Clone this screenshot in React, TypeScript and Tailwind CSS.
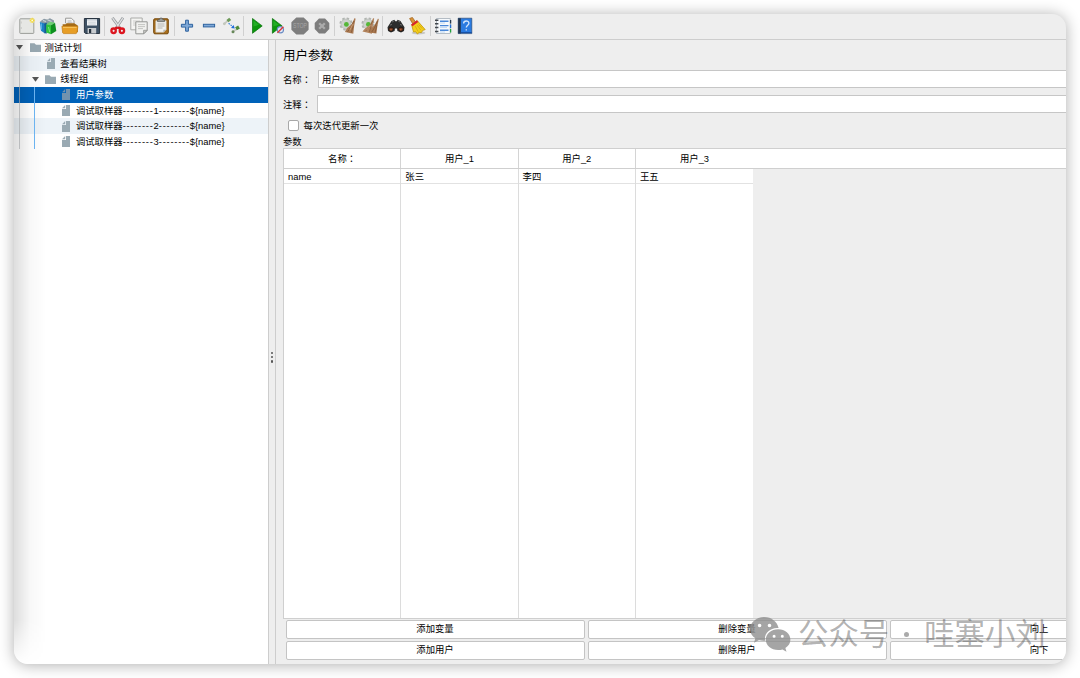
import clsx from "clsx"
import type { ReactNode } from "react"

interface TreeItem {
  label: string
  depth: number
  folder?: boolean
  selected?: boolean
}

const treeItems: TreeItem[] = [
  { label: "测试计划", depth: 0, folder: true },
  { label: "查看结果树", depth: 1 },
  { label: "线程组", depth: 1, folder: true },
  { label: "用户参数", depth: 2, selected: true },
  { label: "调试取样器--------1--------${name}", depth: 2 },
  { label: "调试取样器--------2--------${name}", depth: 2 },
  { label: "调试取样器--------3--------${name}", depth: 2 },
]

const columns = [
  { title: "名称：", value: "name" },
  { title: "用户_1", value: "张三" },
  { title: "用户_2", value: "李四" },
  { title: "用户_3", value: "王五" },
]

const buttonRows = [
  ["添加变量", "删除变量", "向上"],
  ["添加用户", "删除用户", "向下"],
]

const indents = ["pl-0", "pl-[15.7px]", "pl-[31.4px]"]

const Icon = ({ children }: { children: ReactNode }) => (
  <span className="flex w-[21.7px] shrink-0 justify-center">
    <svg width="18" height="18" viewBox="0 0 18 18" fill="none">
      {children}
    </svg>
  </span>
)

const Separator = () => (
  <span className="flex w-[4.4px] shrink-0 justify-center">
    <span className="h-[20px] w-px bg-[#d0d0d0]" />
  </span>
)

const NewIcon = () => (
  <Icon>
    <rect x="1.8" y="1.8" width="14" height="14.6" rx="0.6" fill="#e6e7e4" stroke="#9b9d99" />
    <path d="M3.3 4.5v2M3.3 10v2" stroke="#c5c5c2" strokeWidth="0.8" />
    <circle cx="14.2" cy="3.4" r="2.6" fill="#f5e57a" opacity="0.8" />
    <path d="M14.2 0.6l.8 2 2 .8-2 .8-.8 2-.8-2-2-.8 2-.8z" fill="#f3d633" />
    <circle cx="14.2" cy="3.4" r="0.9" fill="#fffce0" />
  </Icon>
)

const TemplatesIcon = () => (
  <Icon>
    <path d="M1 4.5l4-2.7 3 .6 3-1.2 4 2.3v5l-7 2z" fill="#8a9aa5" />
    <path d="M4 3.5l3 1M8.5 2.8l4 1.6" stroke="#cfd6da" strokeWidth="1.1" />
    <path d="M0.8 5l4.8 1.5v9.8L2 13.8z" fill="#1b7fc4" />
    <path d="M2.2 6.6v6" stroke="#6cc0ee" strokeWidth="1.1" />
    <path d="M5.2 6.4l2.6-.6v10.8l-2.6-.4z" fill="#115a94" />
    <path d="M7.2 7.2l4.8 1v9l-4.8-1.7z" fill="#2fc43c" />
    <path d="M12 8.2l4-2.4 1.3 8.2-5.3 3.2z" fill="#0f8f20" />
    <path d="M7.2 7.2L11 4.8l5 1-4 2.4z" fill="#6fcf74" />
    <path d="M9.5 10l1.2 5" stroke="#7cea7e" />
  </Icon>
)

const OpenIcon = () => (
  <Icon>
    <path d="M4.6 6.2V1.2h5.8l2.6 2.6v4" fill="#f5f5f5" stroke="#9a9a98" />
    <path d="M6.5 4h4M6.5 5.8h5" stroke="#b5b5b5" />
    <path d="M1.6 7.2h3l1-1h7.6l3.6 2.2V15H2.4z" fill="#a46a16" />
    <path d="M0.9 9.3h14l2 .2-1 6.4-1 .7H2.6l-.9-.7z" fill="#e79e26" stroke="#c47e14" strokeWidth="0.7" />
    <path d="M2 10.4h13.6" stroke="#f8c560" />
  </Icon>
)

const SaveIcon = () => (
  <Icon>
    <path d="M1.4 1.5h15.2v15H2.6l-1.2-1.2z" fill="#3e5164" stroke="#293542" />
    <path d="M4 2h10v6.5H4z" fill="#eef1f4" />
    <path d="M4 2h10v1.6H4z" fill="#c3cbd2" />
    <path d="M5.2 5.2h7.6M5.2 7h7.6" stroke="#c5cbd0" strokeWidth="0.8" />
    <path d="M4.6 11h8.6v5.4H4.6z" fill="#c8cccf" />
    <path d="M6 12h2.2v4H6z" fill="#25313c" />
  </Icon>
)

const CutIcon = () => (
  <Icon>
    <path d="M3.4 0.8L11 11.2M14 0.8L7 11.2" stroke="#9a9da0" strokeWidth="2.8" />
    <path d="M3.6 1.2l6.6 9M13.8 1.2l-6 8.6" stroke="#e0e2e3" strokeWidth="1.3" />
    <path d="M8.8 10.4l-2.6 1.3M9 10.4l2.6 1.3" stroke="#d3141c" strokeWidth="2.6" />
    <ellipse cx="4.6" cy="13.8" rx="2.2" ry="2.3" stroke="#dc1620" strokeWidth="2.3" />
    <ellipse cx="12.9" cy="13.8" rx="2.2" ry="2.3" stroke="#dc1620" strokeWidth="2.3" />
  </Icon>
)

const CopyIcon = () => (
  <Icon>
    <path d="M0.8 1h11.4v11.8H0.8z" fill="#f4f4f2" stroke="#aaaba8" />
    <path d="M3 4h7M3 6h7M3 8h4" stroke="#c8c8c6" strokeWidth="0.9" />
    <path d="M5.8 4.8h11.4v8.6l-3.4 3.4h-8z" fill="#f1f1ef" stroke="#959693" />
    <path d="M8 7.6h7M8 9.6h7M8 11.6h5" stroke="#bebfbc" strokeWidth="0.9" />
    <path d="M13.6 16.8v-3.5h3.5z" fill="#c7c8c5" stroke="#8b8c89" strokeWidth="0.7" />
  </Icon>
)

const PasteIcon = () => (
  <Icon>
    <rect x="1.7" y="1.8" width="14.6" height="15" rx="1.2" fill="#aa711f" stroke="#744709" />
    <path d="M3.8 3.8h10.4v8.8l-2.6 2.6H3.8z" fill="#f2f2ef" stroke="#c9c9c4" strokeWidth="0.6" />
    <path d="M5.5 7h7M5.5 9h7M5.5 11h5" stroke="#aaaaa7" strokeWidth="0.9" />
    <path d="M5.5 4.6V3l2-.6.6-1.3h2l.6 1.3 1.8.6v1.6z" fill="#9a9b98" stroke="#565754" strokeWidth="0.7" />
    <path d="M11.4 15.4v-2.6H14z" fill="#b5b5b2" />
  </Icon>
)

const PlusIcon = () => (
  <Icon>
    <path d="M7.6 3.2h2.8v4.1h4.2v2.8h-4.2v4.1H7.6v-4.1H3.4V7.3h4.2z" fill="#7fa9d8" stroke="#2f639f" />
  </Icon>
)

const MinusIcon = () => (
  <Icon>
    <rect x="3.4" y="7.3" width="11.2" height="2.6" fill="#7fa9d8" stroke="#2f639f" />
  </Icon>
)

const ToggleIcon = () => (
  <Icon>
    <path d="M1.6 7.2l4.4-3.6M11 14.4l6-3.6" stroke="#c6c9c2" strokeWidth="1.8" />
    <path d="M5.4 4.2l2.8-2.4" stroke="#6d9a58" strokeWidth="3" />
    <path d="M14 11.8l3-1.8" stroke="#4f8b3a" strokeWidth="3.4" />
    <circle cx="11" cy="14.8" r="1.5" fill="#67885a" />
    <circle cx="2.4" cy="6.8" r="1.4" fill="#c2c7bc" />
    <path d="M6.6 6.3l5 4" stroke="#2f7fe0" strokeWidth="1.1" strokeDasharray="1.5 1" />
    <path d="M12.8 11.4l-3.8-.4 2.6-2.9z" fill="#1f6bdc" />
  </Icon>
)

const StartIcon = () => (
  <Icon>
    <path d="M4.5 1.5l9.7 7.4-9.7 7.4z" fill="#0c960d" stroke="#067008" strokeWidth="0.7" />
    <path d="M5.4 3.6v6l5.6-1.8z" fill="#33bd35" opacity="0.6" />
  </Icon>
)

const StartNoPausesIcon = () => (
  <Icon>
    <path d="M3.4 1.5l9.7 7.4-9.7 7.4z" fill="#0c960d" stroke="#067008" strokeWidth="0.7" />
    <path d="M4.3 3.6v6l5.6-1.8z" fill="#33bd35" opacity="0.6" />
    <circle cx="11.4" cy="12.8" r="3.1" fill="#e1e6f2" stroke="#6b8cc4" strokeWidth="1.2" />
    <path d="M8.4 15.8l6-6" stroke="#dc3838" strokeWidth="1.3" />
  </Icon>
)

const StopIcon = () => (
  <Icon>
    <path d="M5.3.4h7.4l4.9 4.9v7.4l-4.9 4.9H5.3L.4 12.7V5.3z" fill="#7e7e7e" />
    <text
      x="9"
      y="11.4"
      textAnchor="middle"
      textLength="14"
      lengthAdjust="spacingAndGlyphs"
      fontSize="6.6"
      fontFamily="Liberation Sans, sans-serif"
      fill="#a6a6a6"
    >
      STOP
    </text>
  </Icon>
)

const ShutdownIcon = () => (
  <Icon>
    <path d="M6 1.5h6L16.3 6v6L12 16.4H6L1.7 12V6z" fill="#7d7d7d" />
    <path d="M6.2 6.2l5.6 5.6M11.8 6.2l-5.6 5.6" stroke="#ababab" strokeWidth="2.3" />
  </Icon>
)

const Gear = () => (
  <>
    <circle cx="7" cy="7" r="5.6" stroke="#b0b4b0" strokeWidth="2" strokeDasharray="2.4 2" />
    <circle cx="7" cy="7" r="5" fill="#ced2ce" stroke="#b3b7b3" strokeWidth="0.7" />
    <circle cx="7.4" cy="7.4" r="2.4" fill="#55b737" />
  </>
)

const ClearIcon = () => (
  <Icon>
    <Gear />
    <path d="M15.6 1l1 .8-1.5 7.4-.8 7.6-8.4-1.8 2.2-4 4.4-3.4z" fill="#ab7b54" />
    <path d="M15 4l-3 6-3.6 5M14.4 8.6l-2.2 7.2" stroke="#805331" strokeWidth="0.7" />
    <path d="M13.8 7.2L10.8 13" stroke="#d6aa82" strokeWidth="0.8" />
  </Icon>
)

const ClearAllIcon = () => (
  <Icon>
    <Gear />
    <path d="M12.2 1l1 .8-1.4 7-.8 8-9.6-2.2 2.6-3.2 4.8-3.4z" fill="#b48660" />
    <path d="M17 1.4l.8.8-1.5 7.2-.9 7.2-7.4-1.2 1.8-3.6 3.8-3.8z" fill="#a97850" />
    <path d="M11.7 4L9 9.4l-4.4 4.8M16.6 4l-2.8 6.2-3 4.8M15.8 8.4l-1.8 7.4M10 9.8L8.2 15" stroke="#805331" strokeWidth="0.7" />
    <path d="M9.6 8.2l-4 5" stroke="#d6aa82" strokeWidth="0.7" />
  </Icon>
)

const SearchIcon = () => (
  <Icon>
    <path d="M4.5 4l2.8-1.2 1 1.4h1.4l1-1.4L13.5 4l4 6.3-.5 3.6-3 1.6-3.6-1.4-.4-2.6H8l-.4 2.6L4 15.5 1 13.9.5 10.3z" fill="#2c2d2d" />
    <path d="M5 5l1.8-.8M11.3 4.2l1.8.8M3 8.2l2-.8M13 7.4l2 .8" stroke="#737474" strokeWidth="0.9" />
    <ellipse cx="4.1" cy="12.2" rx="2.4" ry="2" fill="#70381f" stroke="#0f0f0f" strokeWidth="0.7" />
    <ellipse cx="13.9" cy="12.2" rx="2.4" ry="2" fill="#70381f" stroke="#0f0f0f" strokeWidth="0.7" />
    <circle cx="4" cy="12.8" r="0.8" fill="#ba6840" />
    <circle cx="13.8" cy="12.8" r="0.8" fill="#ba6840" />
  </Icon>
)

const BroomIcon = () => (
  <Icon>
    <ellipse cx="10.5" cy="15.9" rx="6.8" ry="1.5" fill="#c8c8c4" />
    <path d="M1.6 1.5L4.4.4l3.2 4.7-2.8 1.8z" fill="#d8923a" stroke="#9e5f14" strokeWidth="0.7" />
    <path d="M3.6 7.6L9.2 3.6l8 9-2.4.7-1.4 2.3-2.2-.2-1.8 1.6-1.8-2.3-2.1.3z" fill="#f3ce1b" stroke="#c19708" strokeWidth="0.8" />
    <path d="M7.2 9.2l3 5.4M9.2 8.2l3.8 5.2M10.6 7.4l3.6 4.2" stroke="#c79d08" strokeWidth="0.6" />
    <path d="M3.8 8.4l5.8-4.3" stroke="#d7252c" strokeWidth="2.2" />
  </Icon>
)

const LogIcon = () => (
  <Icon>
    <rect x="2.6" y="1.6" width="13.6" height="14.8" fill="#f6f9fc" stroke="#a5afb9" strokeWidth="0.8" />
    <path d="M1 3.2h3.4M1 6.8h3.4M1 10.6h3.4M1 14.4h3.4" stroke="#43484d" strokeWidth="1.5" />
    <path d="M6 4.2h8.5M6 8.6h8.5M6 13.2h8.5" stroke="#4a88d8" strokeWidth="1.4" />
    <path d="M6 6h5M6 10.4h7M6 15h5" stroke="#b8d2f0" strokeWidth="0.9" />
    <path d="M16.6 3v3.5" stroke="#24384d" strokeWidth="1.3" />
    <path d="M16.6 7.5V11" stroke="#226ed2" strokeWidth="1.3" />
    <path d="M16.6 12v3.5" stroke="#22a23d" strokeWidth="1.3" />
  </Icon>
)

const HelpIcon = () => (
  <Icon>
    <path d="M2.2 1.2h13.6v15.4H2.2z" fill="#2b7be0" stroke="#1e3d66" strokeWidth="0.6" />
    <path d="M2.2 1.2h2.6v15.4H2.2z" fill="#23344a" />
    <path d="M4.8 15.5h11" stroke="#1951a4" />
    <path d="M7.6 6.4c.1-3.2 5.3-3.2 5.3-.2 0 2-2.6 2.1-2.6 4.4M10.3 12.2v1.4" stroke="#cfe3fb" strokeWidth="1.4" />
  </Icon>
)

const FolderIcon = () => (
  <svg width="11" height="9" viewBox="0 0 11 9" className="shrink-0">
    <path d="M0 .3h4.5L6 1.8h5V9H0z" fill="#9aaab3" />
  </svg>
)

const FileIcon = ({ selected }: { selected?: boolean }) => (
  <svg width="8" height="11" viewBox="0 0 8 11" className={clsx("shrink-0", selected ? "fill-[#7292ae]" : "fill-[#9aaab3]")}>
    <path d="M4 0h4v11H0V4h4z" />
    <path d="M3.2 0v3.2H0z" />
  </svg>
)

// dashes are wider than the rest of the latin text
const TreeLabel = ({ text }: { text: string }) => (
  <span className="pt-[0.6px]">
    {text.split(/(-+)/).map((part, i) =>
      part.startsWith("-") ? (
        <span key={i} className="tracking-[0.76px]">
          {part}
        </span>
      ) : (
        part
      )
    )}
  </span>
)

// full-width colon sits in the middle of its cell
const ColonLabel = ({ text }: { text: string }) => (
  <>
    {text.replace("：", "")}
    {text.endsWith("：") && <span className="font-['Noto_Sans_CJK_TC',sans-serif]">：</span>}
  </>
)

const Toolbar = () => (
  <div className="flex h-[26px] shrink-0 items-center border-b border-[#cdcdcd] pb-px pl-[1.8px]">
    <NewIcon />
    <TemplatesIcon />
    <OpenIcon />
    <SaveIcon />
    <Separator />
    <CutIcon />
    <CopyIcon />
    <PasteIcon />
    <Separator />
    <PlusIcon />
    <MinusIcon />
    <ToggleIcon />
    <Separator />
    <StartIcon />
    <StartNoPausesIcon />
    <StopIcon />
    <ShutdownIcon />
    <Separator />
    <ClearIcon />
    <ClearAllIcon />
    <Separator />
    <SearchIcon />
    <BroomIcon />
    <Separator />
    <LogIcon />
    <HelpIcon />
  </div>
)

const TreeRow = ({ item, striped }: { item: TreeItem; striped: boolean }) => (
  <div
    className={clsx(
      "flex h-[15.65px] items-center whitespace-nowrap",
      item.selected ? "bg-[#0062b9] text-white" : striped ? "bg-[#edf3f8]" : "bg-white"
    )}
  >
    <div className={clsx("flex items-center", indents[item.depth])}>
      <span className="flex w-[15.5px] shrink-0 pl-[2.3px]">
        {item.folder && (
          <svg width="7" height="5" viewBox="0 0 7 5">
            <path d="M0 0h7L3.5 4.8z" fill="#555" />
          </svg>
        )}
      </span>
      <span className="flex w-[15px] shrink-0">
        {item.folder ? (
          <FolderIcon />
        ) : (
          <span className="pl-[1.6px]">
            <FileIcon selected={item.selected} />
          </span>
        )}
      </span>
      <TreeLabel text={item.label} />
    </div>
  </div>
)

const Tree = () => (
  <div className="relative w-[255px] shrink-0 border-r border-[#cdcdcd] bg-white">
    {treeItems.map((item, i) => (
      <TreeRow key={item.label} item={item} striped={i % 2 === 1} />
    ))}
    {/* indent guides */}
    <span className="absolute left-[5px] top-[16px] h-[93px] w-px bg-[#b9bcbf]/70" />
    <span className="absolute left-[20px] top-[47px] h-[62px] w-px bg-[#6eb7f5]" />
    <span className="absolute bottom-0 left-0 top-0 w-8 bg-linear-to-r from-black/13 via-black/3 to-transparent mask-b-from-93% mask-b-to-100%" />
  </div>
)

const Divider = () => (
  <div className="flex w-[7px] shrink-0 flex-col items-center gap-[1.7px] border-r border-[#cdcdcd] pt-[312px]">
    <span className="size-[2.4px] shrink-0 rounded-full bg-[#555]" />
    <span className="size-[2.4px] shrink-0 rounded-full bg-[#555]" />
    <span className="size-[2.4px] shrink-0 rounded-full bg-[#555]" />
  </div>
)

const ParamsTable = () => (
  <div className="flex h-[471px] shrink-0 flex-col border border-r-0 border-[#cfcfcf]">
    <div className="flex h-[20px] shrink-0 border-b border-[#cfcfcf] bg-white">
      {columns.map((col, i) => (
        <div
          key={col.title}
          className={clsx("flex w-[117.3px] shrink-0 items-center justify-center", i < 3 && "border-r border-[#d4d4d4]")}
        >
          <span>
            <ColonLabel text={col.title} />
          </span>
        </div>
      ))}
    </div>
    <div className="flex flex-1">
      {columns.map((col, i) => (
        <div key={col.title} className={clsx("w-[117.3px] shrink-0 bg-white", i < 3 && "border-r border-[#dcdcdc]")}>
          <div className="flex h-[15px] items-center border-b border-[#e2e2e2] pl-[4px] pt-px">{col.value}</div>
        </div>
      ))}
    </div>
  </div>
)

const UserParametersPanel = () => (
  <div className="flex min-w-0 flex-1 flex-col overflow-hidden pl-[7px]">
    <h1 className="mt-[7px] h-[18px] text-[12.5px] leading-[18px]">用户参数</h1>
    <div className="mt-[5px] flex h-[18px] items-center">
      <label className="w-[35px] shrink-0 pt-px">
        <ColonLabel text="名称：" />
      </label>
      <div className="flex h-[18px] flex-1 items-center border border-r-0 border-[#c6c6c6] bg-white pl-[3px] pt-px">
        用户参数
      </div>
    </div>
    <div className="mt-[7px] flex h-[18px] items-center">
      <label className="w-[34px] shrink-0 pt-px">
        <ColonLabel text="注释：" />
      </label>
      <div className="h-[18px] flex-1 border border-r-0 border-[#c6c6c6] bg-white" />
    </div>
    <div className="mt-[6px] flex h-[14px] items-center pl-[5px]">
      <span className="-mt-px size-[11px] rounded-[2px] border border-[#a8a8a8] bg-white" />
      <span className="pl-[4.6px]">每次迭代更新一次</span>
    </div>
    <div className="mt-[2px] h-[13px] pt-px leading-[13px]">参数</div>
    <ParamsTable />
    <div className="flex flex-col gap-[2.5px] pl-[2.5px] pt-[1px]">
      {buttonRows.map((row) => (
        <div key={row[0]} className="flex gap-[3px]">
          {row.map((label) => (
            <button
              key={label}
              className="h-[18.5px] w-[299px] shrink-0 rounded-[2px] border border-[#c4c4c4] bg-white leading-[16px]"
            >
              {label}
            </button>
          ))}
        </div>
      ))}
    </div>
  </div>
)

const Watermark = () => (
  <div className="absolute left-[750px] top-[614px] flex h-[40px] items-center whitespace-nowrap text-[30.4px] text-[#555]/45">
    <svg width="41" height="35" viewBox="0 0 41 35" className="mr-[7px] shrink-0" fill="#8f8f8f" fillOpacity="0.8">
      <path
        fillRule="evenodd"
        d="M14.5 0C6.4 0 0 5.4 0 12c0 3.800 2 7 5.300 9.300L4 25.700l5-2.700c1.700.5 3.600.8 5.500.8h.7C13.700 17 19.300 11.200 27 11h1.600C27.200 4.700 21.400 0 14.500 0zM9.600 6.700a1.800 1.800 0 110 3.600 1.800 1.800 0 010-3.600zm9.900 0a1.800 1.800 0 110 3.600 1.800 1.800 0 010-3.600z"
      />
      <path
        fillRule="evenodd"
        d="M28.200 12.300c-7 0-12.400 4.700-12.400 10.400S21.200 33 28.200 33c1.500 0 3-.2 4.300-.6l4 2.300-1.100-3.800c3-1.900 5-4.800 5-8.200 0-5.700-5.400-10.400-12.200-10.400zm-4.100 5.500a1.500 1.500 0 110 3 1.500 1.500 0 010-3zm8.200 0a1.500 1.500 0 110 3 1.500 1.500 0 010-3z"
      />
    </svg>
    <span>公众号</span>
    <span className="mx-[15px] size-[5px] rounded-full bg-[#555]/50" />
    <span>哇塞小刘</span>
  </div>
)

const App = () => {
  return (
    <div className="relative h-[678px] w-[1080px] overflow-hidden bg-white p-[14px] font-['Liberation_Sans','Noto_Sans_CJK_SC',sans-serif] text-[9.35px] leading-[14px] text-black">
      <div className="flex h-[650px] w-[1052px] flex-col overflow-hidden rounded-[14px] bg-[#eeeeee] shadow-[0_1px_15px_rgba(0,0,0,0.32)]">
        <Toolbar />
        <div className="flex min-h-0 flex-1">
          <Tree />
          <Divider />
          <UserParametersPanel />
        </div>
      </div>
      <Watermark />
    </div>
  )
}

export default App
